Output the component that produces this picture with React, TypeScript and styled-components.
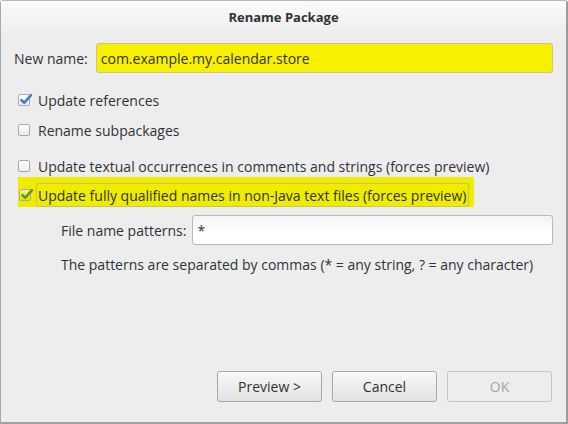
import React from "react";
import styled, { createGlobalStyle } from "styled-components";

const GlobalStyle = createGlobalStyle`
  html, body {
    margin: 0;
    padding: 0;
    background: #ffffff;
  }
  body {
    font-family: "Open Sans", "DejaVu Sans", sans-serif;
    font-size: 14px;
    color: #2e3436;
  }
`;

const Window = styled.div`
  width: 568px;
  height: 424px;
  box-sizing: border-box;
  display: flex;
  flex-direction: column;
  background: #ededed;
  border: 1px solid #a8a8a8;
  border-top-color: #b8b8b8;
  border-right: 2px solid #9c9c9c;
  border-bottom: 2px solid #a0a0a0;
  border-radius: 3px 3px 0 0;
`;

const TitleBar = styled.div`
  height: 34px;
  display: flex;
  align-items: center;
  justify-content: center;
  background: linear-gradient(#fbfbfb, #ededed);
  font-weight: 700;
  font-size: 13px;
  color: #2e3436;
  padding-bottom: 3px;
  box-sizing: border-box;
`;

const Body = styled.div`
  flex: 1;
  display: flex;
  flex-direction: column;
  padding: 8px 13px 0 13px;
`;

const NameRow = styled.div`
  display: flex;
  align-items: center;
  gap: 8px;
`;

const Label = styled.span`
  white-space: nowrap;
  color: #2e3436;
`;

const TextInput = styled.div<{ $highlight?: boolean }>`
  flex: 1;
  height: 30px;
  box-sizing: border-box;
  display: flex;
  align-items: center;
  padding: 0 4px;
  border: 1px solid ${(p) => (p.$highlight ? "#c9c58a" : "#b8b8b8")};
  border-radius: 3px;
  background: ${(p) =>
    p.$highlight ? "#f7f000" : "linear-gradient(#f4f4f4, #ffffff 60%)"};
  color: #2e3436;
`;

const Options = styled.div`
  display: flex;
  flex-direction: column;
  margin-top: 12px;
`;

const CheckRow = styled.div<{ $highlight?: boolean; $gapTop?: number }>`
  height: 30px;
  display: flex;
  align-items: ${(p) => (p.$highlight ? "flex-end" : "center")};
  gap: 8px;
  margin-top: ${(p) => p.$gapTop ?? 0}px;
  margin-left: 4px;
  padding-left: ${(p) => (p.$highlight ? 1 : 0)}px;
  background: ${(p) => (p.$highlight ? "#efec00" : "transparent")};
  width: ${(p) => (p.$highlight ? "456px" : "auto")};
  box-sizing: border-box;
`;

const Box = styled.span<{ $tone?: string; $low?: boolean }>`
  width: 12px;
  height: 12px;
  box-sizing: border-box;
  border: 1px solid #a9a9a9;
  border-radius: 2px;
  background: ${(p) =>
    p.$tone === "green"
      ? "linear-gradient(#f4f1a0, #e8e400)"
      : "linear-gradient(#ffffff, #ececec)"};
  position: relative;
  flex: none;
  margin-bottom: ${(p) => (p.$low ? "6px" : "0")};

  svg {
    position: absolute;
    left: 0px;
    top: -3px;
  }
`;

const CheckText = styled.span<{ $focus?: boolean }>`
  white-space: nowrap;
  padding: ${(p) => (p.$focus ? "0 2px 0 1px" : "0")};
  border: ${(p) => (p.$focus ? "1px solid #c8c35a" : "none")};
  border-radius: 2px;
  margin-left: ${(p) => (p.$focus ? "-3px" : "0")};
  height: ${(p) => (p.$focus ? "24px" : "auto")};
  box-sizing: border-box;
  display: flex;
  align-items: center;
`;

const PatternRow = styled.div`
  display: flex;
  align-items: center;
  gap: 6px;
  margin-top: 8px;
  padding-left: 47px;
`;

const Hint = styled.div`
  padding-left: 47px;
  margin-top: 10px;
`;

const Footer = styled.div`
  margin-top: auto;
  display: flex;
  justify-content: flex-end;
  gap: 10px;
  padding: 0 1px 20px 0;
`;

const Button = styled.div<{ $disabled?: boolean }>`
  width: 105px;
  height: 31px;
  box-sizing: border-box;
  display: flex;
  align-items: center;
  justify-content: center;
  border: 1px solid ${(p) => (p.$disabled ? "#c4c4c4" : "#a8a8a8")};
  border-radius: 3px;
  background: ${(p) =>
    p.$disabled ? "#ededed" : "linear-gradient(#f8f8f8, #e2e2e2)"};
  color: ${(p) => (p.$disabled ? "#a3a6a6" : "#2e3436")};
  box-shadow: ${(p) =>
    p.$disabled ? "none" : "inset 0 1px 0 rgba(255,255,255,0.8)"};
`;

function Check({ color }: { color: string }) {
  return (
    <svg width="14" height="14" viewBox="0 0 14 14">
      <path
        d="M2.5 8.2 L5.2 10.8 L12 3.2"
        fill="none"
        stroke={color}
        strokeWidth="2.6"
        strokeLinecap="round"
        strokeLinejoin="round"
      />
    </svg>
  );
}

type OptionProps = {
  label: string;
  checked?: boolean;
  tone?: "blue" | "green";
  highlight?: boolean;
  gapTop?: number;
};

function Option({ label, checked, tone, highlight, gapTop }: OptionProps) {
  return (
    <CheckRow $highlight={highlight} $gapTop={gapTop}>
      <Box $tone={tone} $low={highlight}>
        {checked && <Check color={tone === "green" ? "#5d9a1c" : "#3f7fd1"} />}
      </Box>
      <CheckText $focus={highlight}>{label}</CheckText>
    </CheckRow>
  );
}

export default function App() {
  return (
    <>
      <GlobalStyle />
      <Window>
        <TitleBar>Rename Package</TitleBar>
        <Body>
          <NameRow>
            <Label>New name:</Label>
            <TextInput $highlight>com.example.my.calendar.store</TextInput>
          </NameRow>
          <Options>
            <Option label="Update references" checked tone="blue" />
            <Option label="Rename subpackages" />
            <Option
              label="Update textual occurrences in comments and strings (forces preview)"
              gapTop={6}
            />
            <Option
              label="Update fully qualified names in non-Java text files (forces preview)"
              checked
              tone="green"
              highlight
              gapTop={-4}
            />
          </Options>
          <PatternRow>
            <Label>File name patterns:</Label>
            <TextInput>*</TextInput>
          </PatternRow>
          <Hint>
            The patterns are separated by commas (* = any string, ? = any
            character)
          </Hint>
          <Footer>
            <Button>Preview &gt;</Button>
            <Button>Cancel</Button>
            <Button $disabled>OK</Button>
          </Footer>
        </Body>
      </Window>
    </>
  );
}
